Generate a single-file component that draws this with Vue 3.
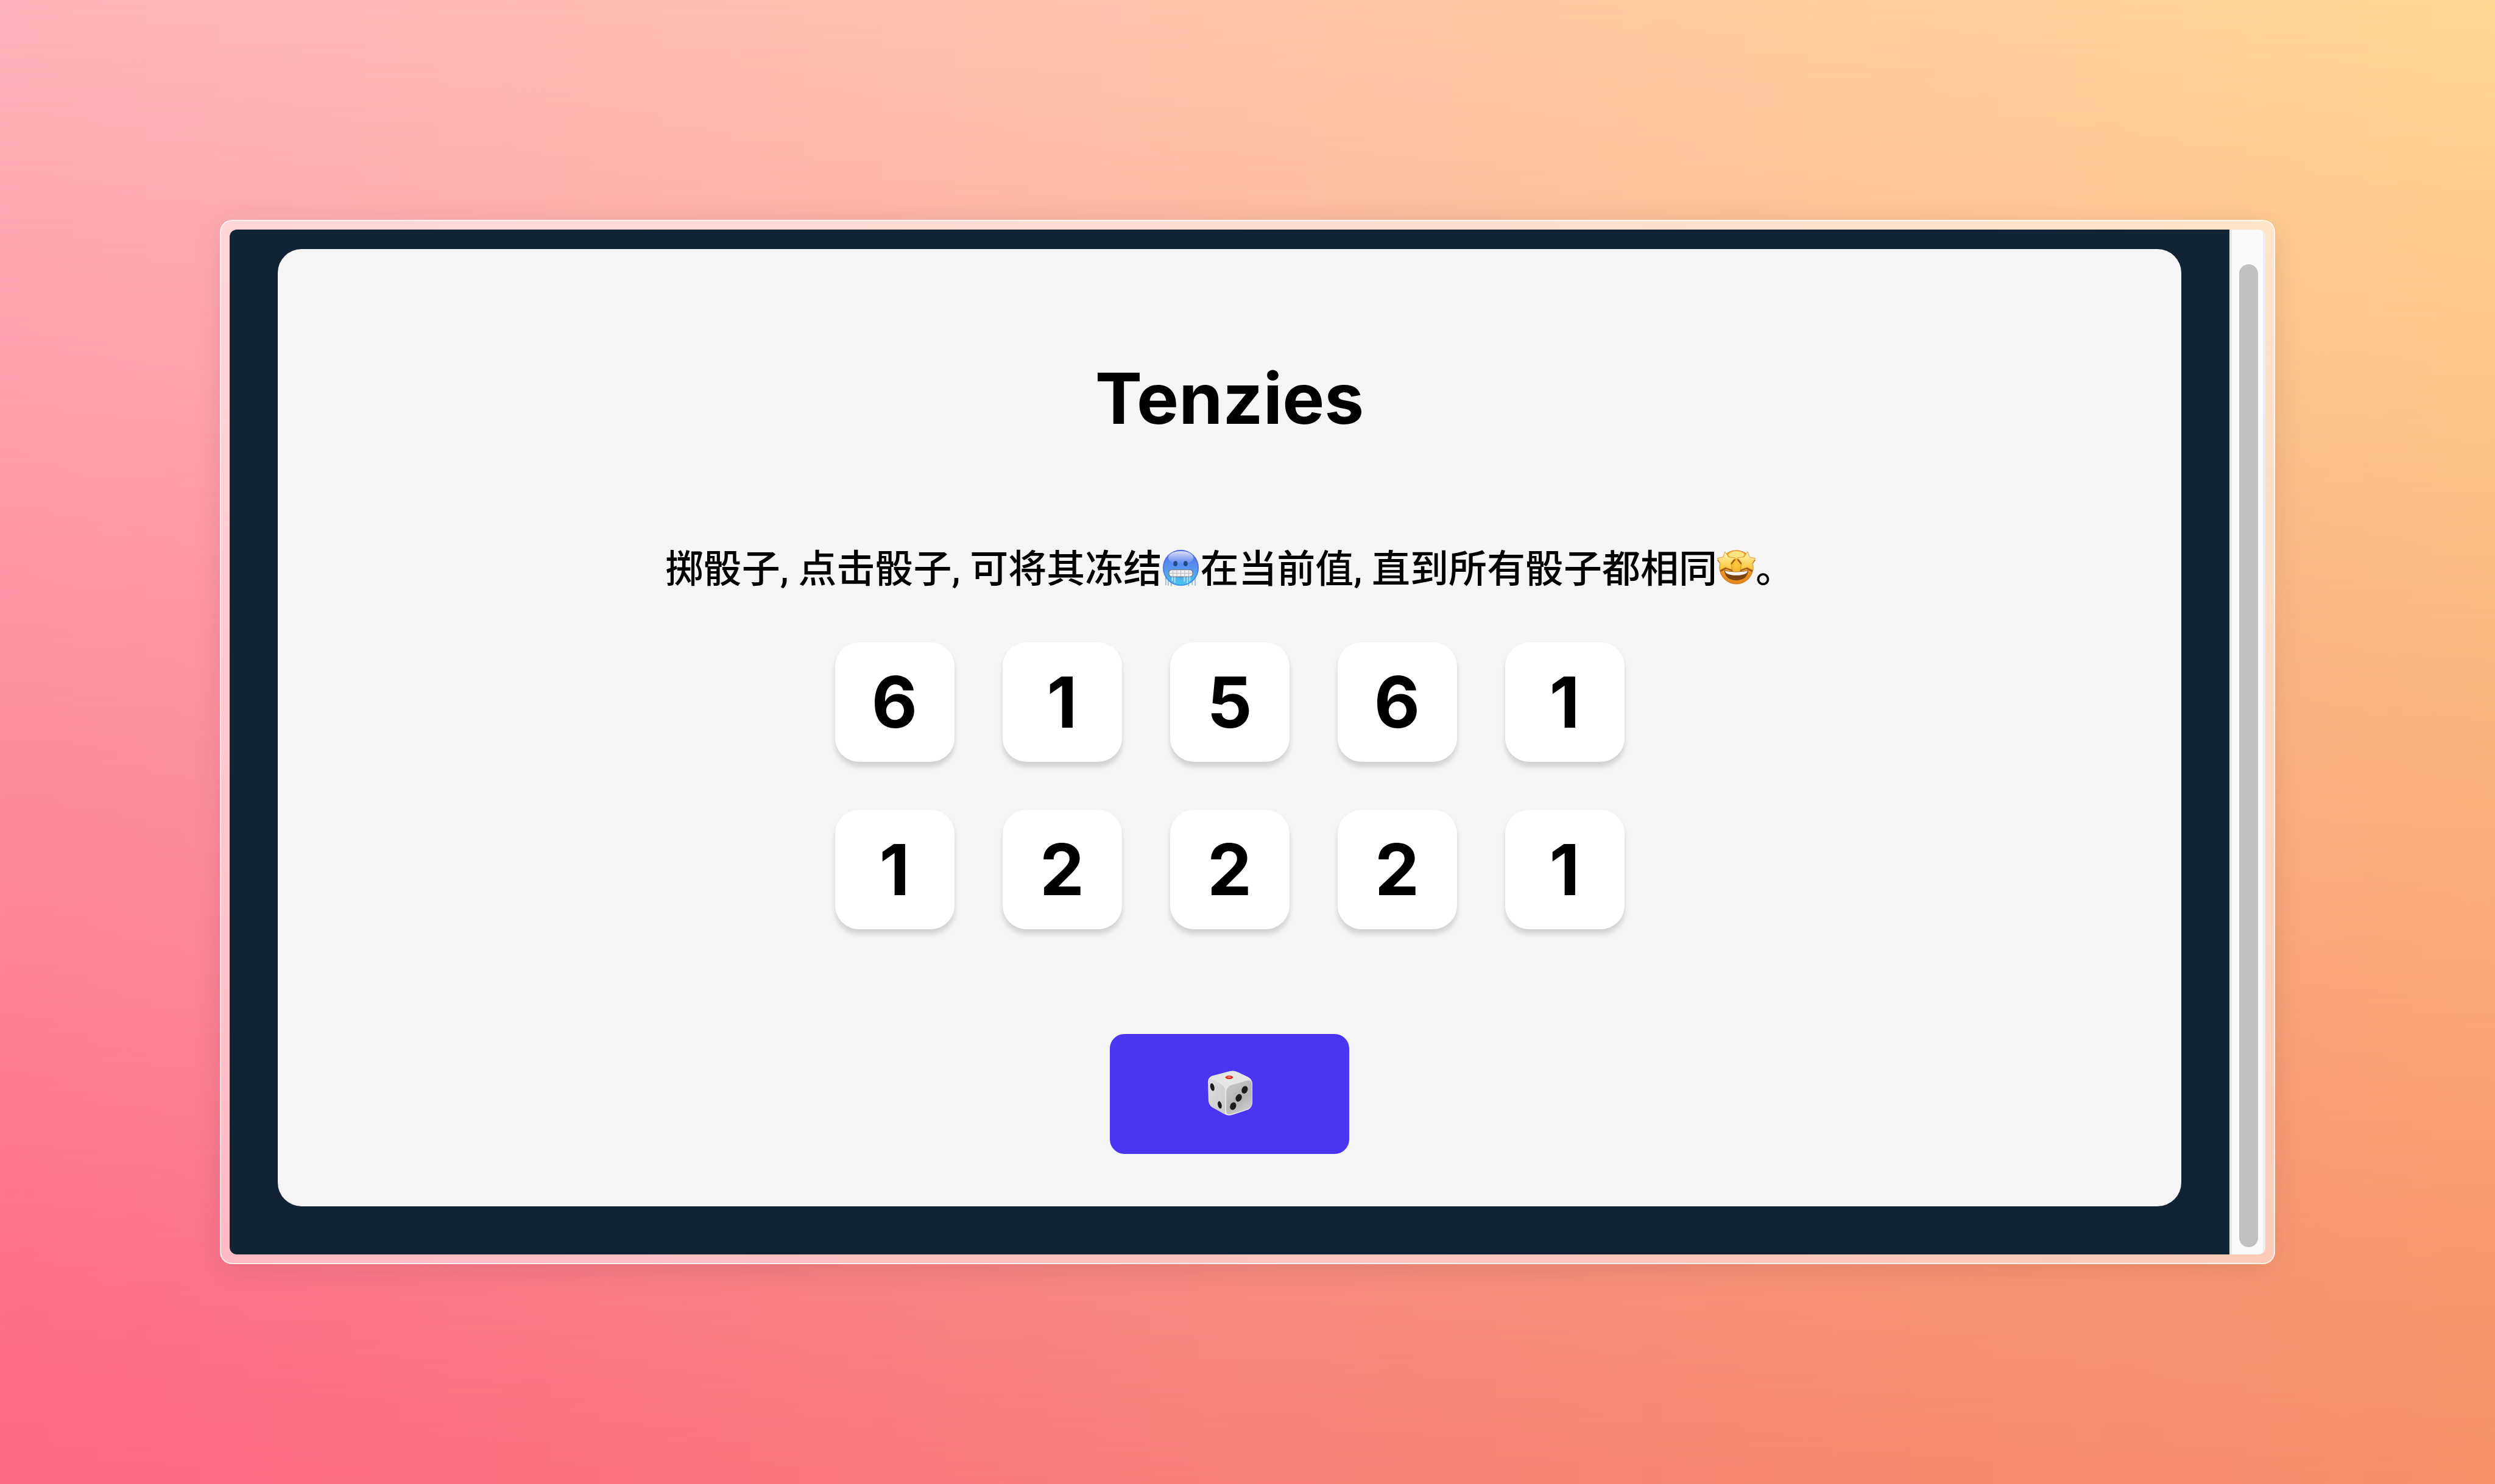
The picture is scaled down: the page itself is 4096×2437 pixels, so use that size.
<script setup>
import { ref } from 'vue'

const dice = ref([
  { id: 1, value: 6 },
  { id: 2, value: 1 },
  { id: 3, value: 5 },
  { id: 4, value: 6 },
  { id: 5, value: 1 },
  { id: 6, value: 1 },
  { id: 7, value: 2 },
  { id: 8, value: 2 },
  { id: 9, value: 2 },
  { id: 10, value: 1 },
])

function roll() {
  dice.value = dice.value.map((die) =>
    die.held ? die : { ...die, value: Math.ceil(Math.random() * 6) }
  )
}

function toggle(die) {
  die.held = !die.held
}
</script>

<template>
  <div class="backdrop">
    <div class="frame">
      <div class="viewport">
        <div class="page">
          <main class="card">
            <h1 class="title">Tenzies</h1>
            <p class="hint">
              掷骰子, 点击骰子, 可将其冻结<svg class="emoji" viewBox="0 0 64 64" role="img" aria-label="冻结">
                <defs>
                  <linearGradient id="cold-skin" x1="0" y1="0" x2="0" y2="1">
                    <stop offset="0" stop-color="#5068ee" />
                    <stop offset="0.45" stop-color="#5a8fee" />
                    <stop offset="0.75" stop-color="#4fb0ec" />
                    <stop offset="1" stop-color="#4cc6ea" />
                  </linearGradient>
                  <linearGradient id="cold-shine" x1="0" y1="0" x2="0" y2="1">
                    <stop offset="0" stop-color="#fff" stop-opacity="0.8" />
                    <stop offset="1" stop-color="#fff" stop-opacity="0" />
                  </linearGradient>
                </defs>
                <path d="M7 46v14M11 50v11M16 54v8M45 55v7M51 51v9M56 46v15" stroke="#9fbfd6" stroke-width="2" stroke-linecap="round" />
                <circle cx="32" cy="32" r="30" fill="url(#cold-skin)" />
                <circle cx="32" cy="32" r="29" fill="none" stroke="#3d5fe6" stroke-opacity="0.5" stroke-width="2" />
                <ellipse cx="32" cy="15" rx="21" ry="11" fill="url(#cold-shine)" />
                <ellipse cx="23" cy="25" rx="3.4" ry="4.4" fill="#234a82" />
                <ellipse cx="40" cy="25" rx="3.4" ry="4.4" fill="#234a82" />
                <rect x="12" y="35" width="40" height="12" rx="5" fill="#f0f0f0" stroke="#6b7f9c" stroke-width="1.6" />
                <path d="M13 41h38M19 36v10M25.500 36v10M32 36v10M38.500 36v10M45 36v10" stroke="#b3b3b8" stroke-width="1" />
                <path d="M18 48v5M22 48v8M38 48v6M43 48v9M47 48v5" stroke="#b5e4f5" stroke-width="2" stroke-linecap="round" />
              </svg>在当前值, 直到所有骰子都相同<svg class="emoji" viewBox="0 0 64 64" role="img" aria-label="太棒了">
                <defs>
                  <radialGradient id="star-skin" cx="0.5" cy="0.4" r="0.6">
                    <stop offset="0" stop-color="#fbc93a" />
                    <stop offset="0.65" stop-color="#f0a52a" />
                    <stop offset="1" stop-color="#dd7f1a" />
                  </radialGradient>
                  <linearGradient id="star-fill" x1="0" y1="0" x2="0" y2="1">
                    <stop offset="0" stop-color="#fff6b8" />
                    <stop offset="1" stop-color="#fbc32e" />
                  </linearGradient>
                </defs>
                <circle cx="32" cy="31" r="28" fill="url(#star-skin)" stroke="#d67f1c" />
                <ellipse cx="32" cy="10" rx="13" ry="6" fill="#ffe98a" fill-opacity="0.9" />
                <path d="M12 36q20 5 40 0q-1 16-20 17q-19-1-20-17z" fill="#7d4413" />
                <path d="M13 37q19 4 38 0q-1 7-19 7.500q-18-.5-19-7.500z" fill="#f7f7f7" />
                <g fill="#9c5810" transform="translate(1 3)">
                  <path d="M13 5l6 9 11 1-7 9 2 11-11-4-10 5 1-12-6-8 11-2z" />
                </g>
                <g fill="#9c5810" transform="translate(-1 3)">
                  <path d="M51 5l-6 9-11 1 7 9-2 11 11-4 10 5-1-12 6-8-11-2z" />
                </g>
                <g fill="url(#star-fill)" stroke="#e3a238" stroke-width="1" stroke-linejoin="round">
                  <path d="M13 5l6 9 11 1-7 9 2 11-11-4-10 5 1-12-5-8 10-2z" />
                  <path d="M51 5l-6 9-11 1 7 9-2 11 11-4 10 5-1-12 5-8-10-2z" />
                </g>
              </svg>。
            </p>
            <div class="dice">
              <button
                v-for="die in dice"
                :key="die.id"
                class="die"
                :class="{ held: die.held }"
                type="button"
                @click="toggle(die)"
              >{{ die.value }}</button>
            </div>
            <button class="roll" type="button" aria-label="掷骰子" @click="roll">
              <svg class="roll-icon" viewBox="0 0 76 76" aria-hidden="true">
                <defs>
                  <linearGradient id="die-left" x1="0" y1="0" x2="1" y2="1">
                    <stop offset="0" stop-color="#dedede" />
                    <stop offset="1" stop-color="#cacaca" />
                  </linearGradient>
                  <linearGradient id="die-right" x1="0.2" y1="0" x2="0.7" y2="1">
                    <stop offset="0" stop-color="#c6c6c6" />
                    <stop offset="0.6" stop-color="#b4b4b4" />
                    <stop offset="1" stop-color="#d0d0d0" />
                  </linearGradient>
                </defs>
                <path d="M38 1q6-1.500 12 1l19 9q7 4 7 12v31q0 8-7 12l-24 8q-10 4-17-1L8 62q-6-5-6-12L1 20q0-8 7-11z" fill="#e6e6e6" />
                <path d="M2 18q1-5 6-3l16 8q6 4 6 11v36q-1 5-5 1L8 61q-5-4-5-10z" fill="url(#die-left)" />
                <path d="M32 37q0-9 8-12l27-8q8-2 8 6v31q0 8-7 11l-26 8q-10 3-10-5z" fill="url(#die-right)" />
                <ellipse cx="37" cy="11.500" rx="6.500" ry="3" fill="#d92d20" />
                <ellipse cx="37" cy="11" rx="3" ry="1.200" fill="#f08070" />
                <g fill="#1c1c1c">
                  <ellipse cx="8.500" cy="28" rx="3.400" ry="6.600" transform="rotate(-14 8.500 28)" />
                  <ellipse cx="21" cy="58" rx="3.200" ry="6.400" transform="rotate(-14 21 58)" />
                  <ellipse cx="63" cy="32.500" rx="5" ry="6.600" transform="rotate(24 63 32.500)" />
                  <ellipse cx="53" cy="46" rx="5" ry="6.600" transform="rotate(24 53 46)" />
                  <ellipse cx="43.500" cy="60" rx="5" ry="6.600" transform="rotate(24 43.500 60)" />
                </g>
              </svg>
            </button>
          </main>
        </div>
        <div class="scroll-track">
          <div class="scroll-thumb"></div>
        </div>
      </div>
    </div>
  </div>
</template>

<style>
body {
  margin: 0;
}
</style>

<style scoped>
.backdrop {
  position: relative;
  isolation: isolate;
  box-sizing: border-box;
  min-height: 100vh;
  padding: 0 361px;
  display: flex;
  align-items: center;
  background: linear-gradient(to right, #fd6784, #f8807a 50%, #f78f67);
}

/* Lighter tones that fade out towards the bottom edge */
.backdrop::before {
  content: '';
  position: absolute;
  inset: 0;
  z-index: -1;
  background: linear-gradient(to right, #ffb3ba, #ffc4a9 50%, #ffd893);
  mask-image: linear-gradient(to bottom, #000, transparent);
}

.frame {
  flex: 1;
  padding: 14px;
  border: 2px solid rgba(255, 255, 255, 0.7);
  border-radius: 20px;
  background: rgba(255, 255, 255, 0.5);
  box-shadow: 0 8px 48px rgba(0, 0, 0, 0.1);
}

.viewport {
  display: flex;
  border-radius: 12px;
  overflow: hidden;
}

.page {
  flex: 1;
  padding: 32px 79px 79px;
  background: #122433;
}

.card {
  display: flex;
  flex-direction: column;
  align-items: center;
  padding: 175px 40px 86px;
  border-radius: 39px;
  background: #f5f5f5;
  color: #000;
}

.title {
  margin: 0;
  font: 700 116px/140px Inter, "Liberation Sans", sans-serif;
}

.hint {
  margin: 171px 0 80px;
  font: 500 63px/80px Roboto, "Noto Sans CJK SC", sans-serif;
}

.emoji {
  width: 63px;
  height: 63px;
  vertical-align: -8px;
}

.dice {
  display: grid;
  grid-template-columns: repeat(5, 196px);
  gap: 79px;
}

.die {
  height: 196px;
  padding: 0;
  border: 0;
  border-radius: 39px;
  background: #fff;
  box-shadow: 0 8px 8px rgba(0, 0, 0, 0.15);
  color: #000;
  font: 700 116px/140px Inter, "Liberation Sans", sans-serif;
  cursor: pointer;
}

.die.held {
  background: #59e391;
}

.roll {
  display: flex;
  align-items: center;
  justify-content: center;
  width: 393px;
  height: 197px;
  margin-top: 172px;
  padding: 0 0 4px;
  border: 0;
  border-radius: 24px;
  background: #4b35f3;
  cursor: pointer;
}

.roll-icon {
  width: 74px;
  height: 74px;
}

.scroll-track {
  box-sizing: border-box;
  display: flex;
  width: 59px;
  padding: 57px 8px 12px 12px;
  border-left: 4px solid #e6e6e6;
  border-right: 4px solid #ededed;
  background: #fafafa;
}

.scroll-thumb {
  flex: 1;
  border-radius: 16px;
  background: #c1c1c1;
}
</style>
